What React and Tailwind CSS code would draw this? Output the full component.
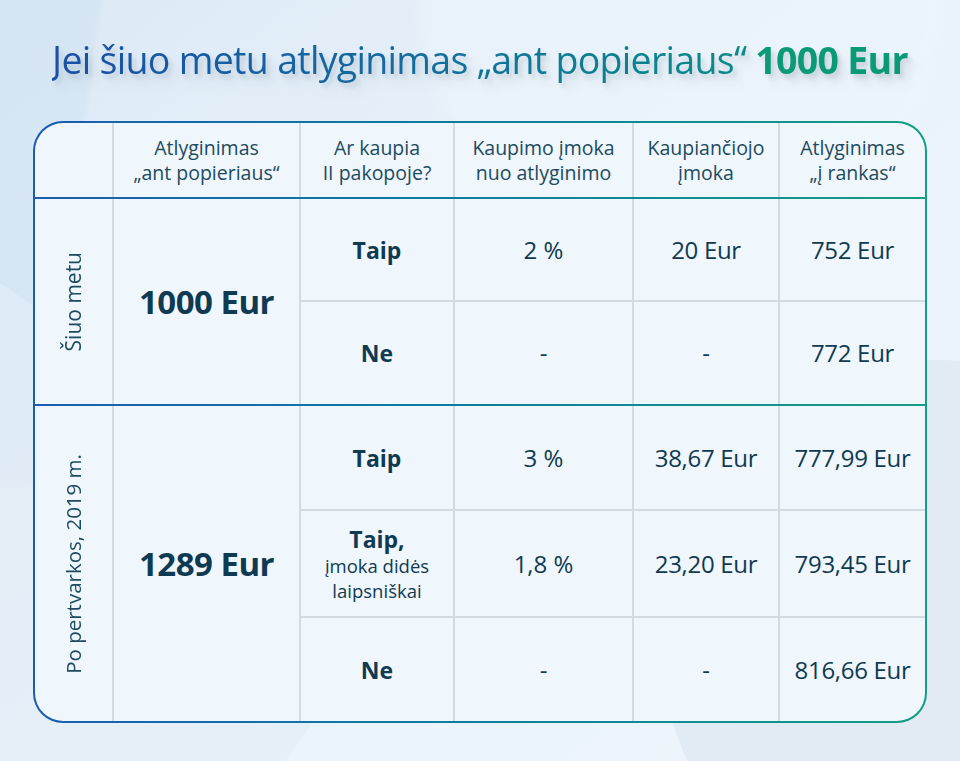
const ink = "text-[#0f3a52]";

function HeadCell({ children, first }) {
  return (
    <div
      className={`flex items-center justify-center text-center text-[19.5px] leading-[25px] text-[#1c4a60] ${
        first ? "" : "border-l-2 border-[#d3dbe2]"
      }`}
    >
      {children}
    </div>
  );
}

function GradientLine() {
  return <div className="h-[2px] w-full bg-gradient-to-r from-[#1a5cb0] to-[#159e82]" />;
}

function SubRow({ answer, rate, own, net, height, last }) {
  return (
    <div
      className={`grid grid-cols-[154px_179px_146px_147px] ${height} ${
        last ? "" : "border-b-2 border-[#d3dbe2]"
      }`}
    >
      <div className="flex flex-col items-center justify-center border-l-2 border-[#d3dbe2] text-center">
        {answer}
      </div>
      <div className="flex items-center justify-center border-l-2 border-[#d3dbe2] text-[24px]">{rate}</div>
      <div className="flex items-center justify-center border-l-2 border-[#d3dbe2] text-[24px] tracking-[-0.3px]">{own}</div>
      <div className="flex items-center justify-center border-l-2 border-[#d3dbe2] text-[24px] tracking-[-0.3px]">{net}</div>
    </div>
  );
}

function Bold({ children }) {
  return <span className="text-[23px] font-bold leading-[28px]">{children}</span>;
}

function Section({ label, amount, size, children }) {
  return (
    <div className="flex">
      <div className="flex w-[77px] items-center justify-center">
        <span className={`rotate-180 leading-none text-[#1c4a60] [writing-mode:vertical-rl] ${size}`}>
          {label}
        </span>
      </div>
      <div className="flex w-[187px] items-center justify-center border-l-2 border-[#d3dbe2]">
        <span className="text-[33px] font-bold tracking-[-0.5px]">{amount}</span>
      </div>
      <div className="flex flex-col">{children}</div>
    </div>
  );
}

export default function App() {
  return (
    <div
      className={`relative h-[761px] w-[960px] overflow-hidden bg-gradient-to-br from-[#dce9f5] via-[#eaf3fb] to-[#eef5fb] font-['Open_Sans',sans-serif] ${ink}`}
    >
      {/* faint background shapes */}
      <div className="absolute left-[-60px] top-[-40px] h-[520px] w-[130px] rotate-[8deg] bg-[#d4e4f2] opacity-70 blur-[2px]" />
      <div className="absolute left-[-200px] top-[380px] h-[500px] w-[520px] rotate-[35deg] bg-[#e2edf7] opacity-70" />
      <div className="absolute right-[-260px] top-[360px] h-[560px] w-[560px] rounded-full bg-[#dfe9f2] opacity-80" />
      <div className="absolute left-[420px] top-[-260px] h-[520px] w-[520px] rounded-full bg-[#edf5fc] opacity-60 blur-[6px]" />

      <div className="relative flex flex-col items-center">
        <h1 className="mt-[37px] text-[37.5px] leading-[46px] tracking-[-0.7px] [filter:drop-shadow(3px_4px_2px_rgba(70,90,110,0.16))_drop-shadow(7px_9px_5px_rgba(70,90,110,0.10))]">
          <span className="bg-gradient-to-r from-[#1a4fa6] via-[#136b9f] to-[#0b8d86] bg-clip-text text-transparent">
            Jei šiuo metu atlyginimas „ant popieriaus“{" "}
          </span>
          <span className="font-bold text-[#0b9a77]">1000 Eur</span>
        </h1>

        <div className="mt-[38px] w-[894px] rounded-[30px] bg-gradient-to-r from-[#1a5cb0] to-[#159e82] p-[2px]">
          <div className="overflow-hidden rounded-[28px] bg-[#eff6fc]">
            <div className="grid h-[74px] grid-cols-[77px_187px_154px_179px_146px_147px]">
              <HeadCell first />
              <HeadCell>
                Atlyginimas
                <br />
                „ant popieriaus“
              </HeadCell>
              <HeadCell>
                Ar kaupia
                <br />
                II pakopoje?
              </HeadCell>
              <HeadCell>
                Kaupimo įmoka
                <br />
                nuo atlyginimo
              </HeadCell>
              <HeadCell>
                Kaupiančiojo
                <br />
                įmoka
              </HeadCell>
              <HeadCell>
                Atlyginimas
                <br />
                „į rankas“
              </HeadCell>
            </div>

            <GradientLine />

            <Section label="Šiuo metu" amount="1000 Eur" size="text-[21px]">
              <SubRow answer={<Bold>Taip</Bold>} rate="2 %" own="20 Eur" net="752 Eur" height="h-[103px]" />
              <SubRow answer={<Bold>Ne</Bold>} rate="-" own="-" net="772 Eur" height="h-[102px]" last />
            </Section>

            <GradientLine />

            <Section label="Po pertvarkos, 2019 m." amount="1289 Eur" size="text-[20.5px]">
              <SubRow answer={<Bold>Taip</Bold>} rate="3 %" own="38,67 Eur" net="777,99 Eur" height="h-[105px]" />
              <SubRow
                answer={
                  <>
                    <Bold>Taip,</Bold>
                    <span className="text-[18.5px] leading-[25px]">
                      įmoka didės
                      <br />
                      laipsniškai
                    </span>
                  </>
                }
                rate="1,8 %"
                own="23,20 Eur"
                net="793,45 Eur"
                height="h-[107px]"
              />
              <SubRow answer={<Bold>Ne</Bold>} rate="-" own="-" net="816,66 Eur" height="h-[103px]" last />
            </Section>
          </div>
        </div>
      </div>
    </div>
  );
}
